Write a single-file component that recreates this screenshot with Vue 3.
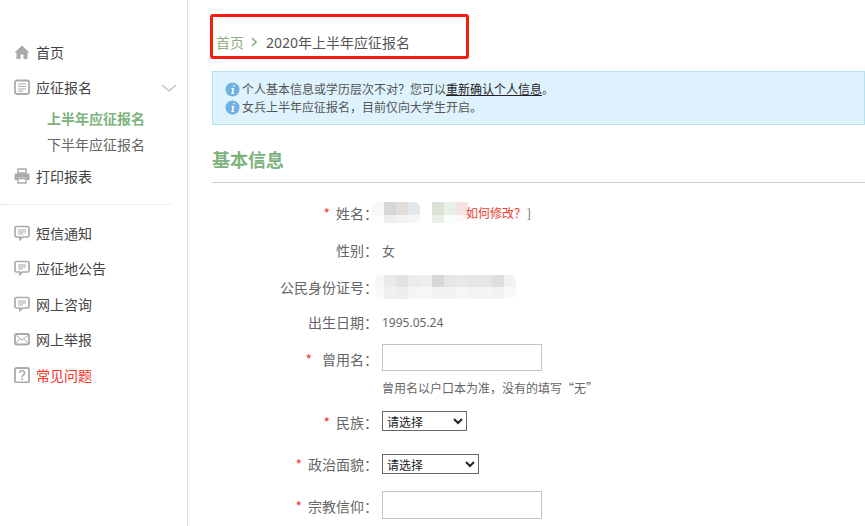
<script setup>
const group2 = [
  { label: '短信通知', icon: 'chat' },
  { label: '应征地公告', icon: 'chat' },
  { label: '网上咨询', icon: 'chat' },
  { label: '网上举报', icon: 'mail' },
  { label: '常见问题', icon: 'help', red: true },
]
const nameTiles1 = ['#f8f8f8', '#d6d7d9', '#e3dedd', '#e3e6ea']
const nameTiles2 = ['#fdfdfd', '#eeeeee', '#f4f2f1', '#f5f6f8']
const nameTiles3 = ['#dae4d6', '#e6efe8', '#f6e3e0']
const nameTiles4 = ['#e9efe7', '#fbfdfb', '#fdf8f7']
const idTiles1 = ['#f6f6f6', '#eaeaea', '#e2e2e2', '#ececec', '#eeeeee', '#d8d8d8', '#e6e6e6', '#e8e8e8', '#e6e6e6', '#e6e6e6', '#dedede', '#f2f2f2']
const idTiles2 = ['#fafafa', '#f0f0f0', '#eeeeee', '#f5f5f5', '#f6f6f6', '#f2f2f2', '#f2f2f2', '#f6f6f6', '#f4f4f4', '#f4f4f4', '#f2f2f2', '#f9f9f9']
</script>

<template>
  <div class="page">
    <aside class="side">
      <ul class="nav first">
        <li class="item home-item">
          <svg class="ic" viewBox="0 0 16 16"><path d="M8 1.500 15.500 8.500H13.500V15H9.500V10.500H6.500V15H2.500V8.500H.5z" fill="#a9a9a9"/></svg>
          <span>首页</span>
        </li>
        <li class="item">
          <svg class="ic" viewBox="0 0 16 16"><rect x="1" y="1.500" width="14" height="13.500" rx="2" fill="none" stroke="#aaa" stroke-width="1.800"/><path d="M4 5h8M4 7.500h8M4 10h8M4 12.200h5" stroke="#aaa" stroke-width="1"/></svg>
          <span>应征报名</span>
          <svg class="chev" viewBox="0 0 16 8"><path d="M1 1l7 6 7-6" fill="none" stroke="#b5bcc4" stroke-width="1.100"/></svg>
        </li>
        <li class="sub active">上半年应征报名</li>
        <li class="sub second">下半年应征报名</li>
        <li class="item print">
          <svg class="ic" viewBox="0 0 16 16"><path d="M4 1h8v4H4z" fill="none" stroke="#aaa" stroke-width="1.400"/><path d="M1 5.500h14a.8.8 0 0 1 .5.700V12h-3V9.500h-9V12H.5V6.200a.8.8 0 0 1 .5-.700z" fill="#aaa"/><path d="M4 10.500h8V15H4z" fill="none" stroke="#aaa" stroke-width="1.400"/></svg>
          <span>打印报表</span>
        </li>
      </ul>
      <div class="dots"></div>
      <ul class="nav">
        <li v-for="g in group2" :key="g.label" class="item tight" :class="{ red: g.red }">
          <svg v-if="g.icon === 'chat'" class="ic" viewBox="0 0 16 16"><path d="M2.500 1.500h11a1.500 1.500 0 0 1 1.500 1.500v7.500a1.500 1.500 0 0 1-1.500 1.500H8.500L6 14.500V12H2.500A1.500 1.500 0 0 1 1 10.500V3a1.500 1.500 0 0 1 1.500-1.500z" fill="none" stroke="#aaa" stroke-width="1.700"/><path d="M4 5h8M4 7h8M4 9h5" stroke="#aaa" stroke-width="1"/></svg>
          <svg v-else-if="g.icon === 'mail'" class="ic" viewBox="0 0 16 16"><rect x="1" y="3" width="14" height="10.500" rx="1.500" fill="none" stroke="#aaa" stroke-width="1.800"/><path d="M1.500 4 8 9l6.500-5M1.500 13 6 7.500M14.500 13 10 7.500" fill="none" stroke="#aaa" stroke-width="1"/></svg>
          <svg v-else class="ic" viewBox="0 0 16 16"><rect x="1" y="1" width="14" height="14.500" rx="1.500" fill="none" stroke="#aaa" stroke-width="1.800"/><path d="M5.500 6a2.500 2.500 0 1 1 3.800 2.100C8.400 8.700 8 9.100 8 10.200" fill="none" stroke="#aaa" stroke-width="1.600"/><rect x="7.200" y="11.200" width="1.600" height="1.800" fill="#aaa"/></svg>
          <span>{{ g.label }}</span>
        </li>
      </ul>
    </aside>

    <main class="main">
      <div class="crumb">
        <span class="home">首页</span>
        <svg class="sep" viewBox="0 0 7 10"><path d="M1 1l4 4-4 4" fill="none" stroke="#8fae84" stroke-width="1.600"/></svg>
        <span>2020年上半年应征报名</span>
      </div>
      <div class="notice">
        <p>
          <svg class="info" viewBox="0 0 16 16"><circle cx="8" cy="8" r="7.500" fill="#6fb1e2"/><path d="M8.800 3.200h1.500v1.600H8.800zM7 6.500h2.800L8.800 11.500h1v1.300H6.800l1-5H7z" fill="#fff"/></svg>
          个人基本信息或学历层次不对？您可以<u>重新确认个人信息</u>。
        </p>
        <p>
          <svg class="info" viewBox="0 0 16 16"><circle cx="8" cy="8" r="7.500" fill="#6fb1e2"/><path d="M8.800 3.200h1.500v1.600H8.800zM7 6.500h2.800L8.800 11.500h1v1.300H6.800l1-5H7z" fill="#fff"/></svg>
          女兵上半年应征报名，目前仅向大学生开启。
        </p>
      </div>
      <h2 class="title">基本信息</h2>

      <div class="form">
        <div class="row r-name">
          <label><i>*</i>姓名：</label>
          <div class="mosaic name">
            <div class="tiles"><b v-for="(c, i) in nameTiles1" :key="i" :style="{ background: c }"></b></div>
            <div class="tiles"><b v-for="(c, i) in nameTiles2" :key="i" :style="{ background: c }"></b></div>
          </div>
          <div class="mosaic name2">
            <div class="tiles"><b v-for="(c, i) in nameTiles3" :key="i" :style="{ background: c }"></b></div>
            <div class="tiles"><b v-for="(c, i) in nameTiles4" :key="i" :style="{ background: c }"></b></div>
          </div>
          <span class="how">如何修改？</span><span class="bracket">]</span>
        </div>
        <div class="row r-sex"><label>性别：</label><span class="val">女</span></div>
        <div class="row r-id">
          <label>公民身份证号：</label>
          <div class="mosaic id">
            <div class="tiles"><b v-for="(c, i) in idTiles1" :key="i" :style="{ background: c }"></b></div>
            <div class="tiles"><b v-for="(c, i) in idTiles2" :key="i" :style="{ background: c }"></b></div>
          </div>
        </div>
        <div class="row r-birth"><label>出生日期：</label><span class="val num">1995.05.24</span></div>
        <div class="row r-old">
          <label><i class="wide">*</i>曾用名：</label>
          <input class="txt" type="text" />
        </div>
        <p class="hint">曾用名以户口本为准，没有的填写“无”</p>
        <div class="row r-nation">
          <label><i>*</i>民族：</label>
          <select class="sel s1"><option>请选择</option></select>
        </div>
        <div class="row r-pol">
          <label><i>*</i>政治面貌：</label>
          <select class="sel s2"><option>请选择</option></select>
        </div>
        <div class="row r-rel">
          <label><i>*</i>宗教信仰：</label>
          <input class="txt tall" type="text" />
        </div>
      </div>
    </main>
    <div class="annot"></div>
  </div>
</template>

<style>
html, body { margin: 0; background: #fff; overflow: hidden; }
</style>

<style scoped>
.page {
  position: relative;
  width: 865px;
  height: 526px;
  overflow: hidden;
  display: flex;
  font-family: "Noto Sans CJK SC", "Liberation Sans", sans-serif;
  font-size: 14px;
  color: #666;
  background: #fff;
}
.side {
  width: 187px;
  height: 526px;
  flex: none;
  border-right: 1px solid #ddd;
  padding-top: 34px;
  box-sizing: content-box;
}
ul, p, h2 { margin: 0; padding: 0; list-style: none; }
.item {
  display: flex;
  align-items: center;
  height: 36px;
  padding-left: 14px;
  color: #444;
  position: relative;
}
.item.home-item { height: 35px; }
.item.tight { height: 35.500px; }
.item.print { margin-top: 1px; }
.item.red { color: #f5331f; }
.ic { width: 16px; height: 16px; margin-right: 6px; flex: none; }
.chev { position: absolute; left: 161px; top: 15px; width: 16px; height: 8px; }
.sub { padding-left: 47px; height: 26px; line-height: 26px; color: #666; }
.sub.active { color: #7cb47c; font-weight: 700; }
.sub.second { margin-bottom: 1px; }
.dots { width: 172px; margin: 10px 0 10px; border-top: 1px dotted #ddd; }

.main { flex: 1; padding: 0 0 0 24px; min-width: 0; }
.crumb {
  display: flex;
  align-items: center;
  height: 20px;
  margin-top: 32px;
  padding-left: 4px;
  color: #555;
  font-family: "Noto Sans", "Noto Sans CJK SC", sans-serif;
}
.home { color: #8fae84; }
.sep { width: 7px; height: 10px; margin: 0 8px 0 7px; }
.notice {
  margin-top: 19px;
  height: 44px;
  background: #def3fd;
  border: 1px solid #b6e2ee;
  padding: 8px 0 0 12px;
  box-sizing: content-box;
  font-size: 12px;
  line-height: 18px;
  color: #555;
}
.notice u { color: #222; }
.notice p { height: 18px; display: flex; align-items: center; }
.info { width: 15px; height: 15px; margin-right: 2px; }
.title {
  margin-top: 21px;
  height: 36px;
  line-height: 26px;
  font-size: 18px;
  font-weight: 700;
  color: #7cb47c;
  border-bottom: 1px solid #ccc;
}
.row { display: flex; align-items: center; }
label { width: 166px; flex: none; text-align: right; color: #666; margin-right: 4px; }
label i { color: #ef3b2d; font-style: normal; margin-right: 6px; }
label i.wide { margin-right: 10px; }
.r-name label { margin-top: -2px; }
.r-old label { margin-top: 3px; }
.r-nation label { margin-top: 2px; }
.r-rel label { margin-top: 2px; }
.val { color: #666; font-size: 13px; }
.num { font-family: "Noto Sans", sans-serif; font-size: 12px; }
.r-name { margin-top: 19px; height: 24px; }
.r-sex { margin-top: 12px; height: 24px; }
.r-id { margin-top: 13px; height: 24px; }
.r-birth { margin-top: 11px; height: 24px; }
.r-old { margin-top: 9px; height: 28px; }
.hint { margin: 7px 0 0 170px; font-size: 12px; line-height: 20px; color: #666; }
.r-nation { margin-top: 10px; height: 26px; }
.r-pol { margin-top: 17px; height: 26px; }
.r-rel { margin-top: 14px; height: 28px; }
.txt {
  width: 160px;
  height: 27px;
  box-sizing: border-box;
  border: 1px solid #c4c4c4;
  background: #fff;
  padding: 0;
  outline: none;
  flex: none;
}
.txt.tall { height: 28px; }
.sel {
  height: 20px;
  box-sizing: border-box;
  border: 1px solid #666;
  background: #fff;
  color: #222;
  font-family: inherit;
  font-size: 12px;
  padding: 0;
  flex: none;
}
.s1 { width: 85px; }
.s2 { width: 97px; }
.mosaic { overflow: hidden; flex: none; }
.tiles { display: flex; height: 12px; }
.tiles b { width: 12px; flex: none; }
.name .tiles:first-child, .name2 .tiles:first-child { height: 13px; }
.mosaic.name { width: 48px; height: 21px; border-radius: 6px; margin: -4px 0 0 -10px; }
.mosaic.name2 { width: 36px; height: 21px; margin: -4px 0 0 12px; border-radius: 0 0 12px 0; }
.mosaic.id { width: 141px; height: 24px; margin-left: -7px; border-radius: 6px; }
.id .tiles b:first-child { width: 9px; }
.how { color: #ef3b2d; font-size: 12px; margin: -4px 0 0 -2px; }
.bracket { color: #666; font-size: 12px; margin: -4px 0 0 1px; }
.annot {
  position: absolute;
  left: 210px;
  top: 14px;
  width: 259px;
  height: 45px;
  box-sizing: border-box;
  border: 3px solid #fb1a10;
  border-radius: 3px;
  pointer-events: none;
}
</style>
